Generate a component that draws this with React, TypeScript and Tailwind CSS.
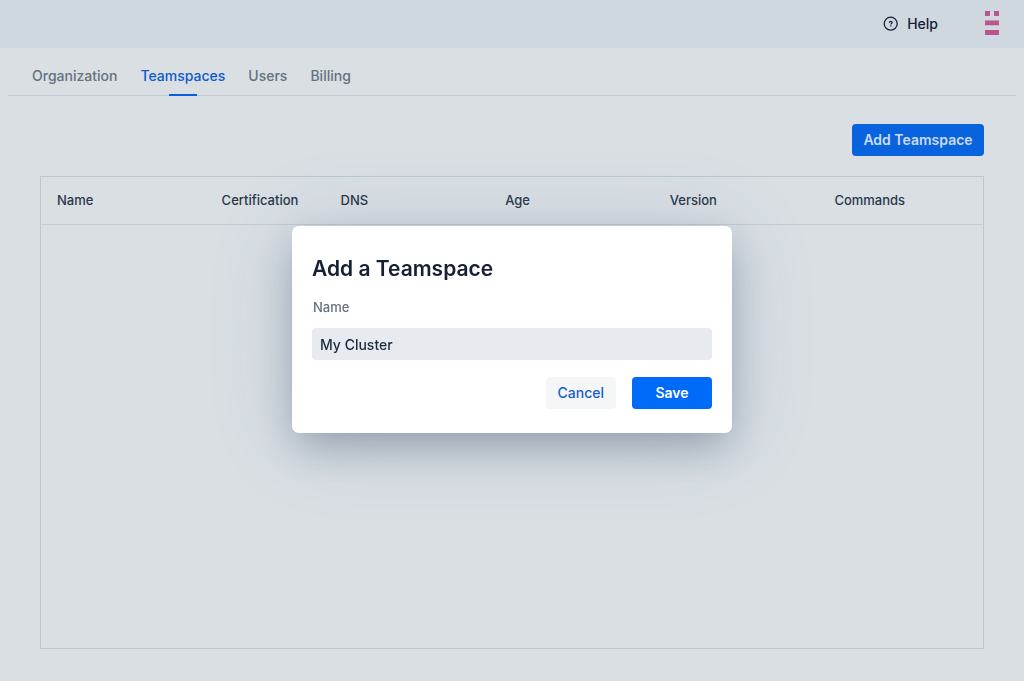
import { useState } from "react";

const tabs = ["Organization", "Teamspaces", "Users", "Billing"];
const columns = [
  { label: "Name", width: "" },
  { label: "Certification", width: "w-[119px]" },
  { label: "DNS", width: "" },
  { label: "Age", width: "" },
  { label: "Version", width: "" },
  { label: "Commands", width: "" },
];

function HelpIcon() {
  return (
    <svg width="16" height="16" viewBox="0 0 16 16" fill="none" stroke="currentColor" aria-hidden="true">
      <circle cx="7.7" cy="7.7" r="6.5" strokeWidth="1.3" />
      <path d="M6.4 6.7C6.4 5.8 7 5.3 7.8 5.3s1.4.5 1.4 1.2c0 .9-1.4 1-1.4 1.9" strokeWidth="1.2" />
      <path d="M7.8 9.2v1.3" strokeWidth="1.3" />
    </svg>
  );
}

function Avatar() {
  return (
    <svg width="28" height="28" viewBox="0 0 28 28" role="img" aria-label="Account">
      <circle cx="14" cy="14" r="14" fill="#d1d7db" />
      <path d="M7 2h5v5H7zM16 2h5v5h-5zM7 11.6h14v4.6H7zM7 21h14v5H7z" fill="#b95591" />
    </svg>
  );
}

function Header() {
  return (
    <header className="flex h-12 items-center justify-end gap-10 bg-[#d0d8df] pr-[18px]">
      <a href="#help" className="flex items-center gap-2 text-[#152238]">
        <HelpIcon />
        Help
      </a>
      <a href="#account" className="mb-0.5">
        <Avatar />
      </a>
    </header>
  );
}

function Tabs() {
  return (
    <nav className="mx-2 flex h-12 gap-[23px] border-b border-[#c2cbd3] px-6">
      {tabs.map((tab) => {
        const active = tab === "Teamspaces";
        return (
          <a
            key={tab}
            href={`#${tab.toLowerCase()}`}
            aria-current={active ? "page" : undefined}
            className={`flex flex-col items-center pt-[18px] leading-5 ${active ? "text-[#0e5bc9]" : "text-[#65717f]"}`}
          >
            {tab}
            {active && <span className="-mb-px mt-auto h-0.5 w-7 bg-[#0b5fdb]" />}
          </a>
        );
      })}
    </nav>
  );
}

function AddTeamspaceDialog({ onClose }: { onClose: () => void }) {
  const [name, setName] = useState("My Cluster");
  return (
    <div className="fixed inset-0 flex items-center justify-center pb-[22px]">
      <form
        role="dialog"
        aria-modal="true"
        aria-labelledby="dialog-title"
        onSubmit={(event) => {
          event.preventDefault();
          onClose();
        }}
        className="flex w-full max-w-[440px] flex-col rounded-[7px] bg-white px-5 pt-7 pb-6 shadow-[0_6px_90px_rgba(60,75,140,0.14),0_16px_40px_-4px_rgba(50,75,95,0.38)]"
      >
        <h2 id="dialog-title" className="text-[21px] leading-[30px] font-semibold text-[#152033]">
          Add a Teamspace
        </h2>
        <label htmlFor="teamspace-name" className="mt-[13px] px-px text-[13px] leading-5 text-[#65717f]">
          Name
        </label>
        <input
          id="teamspace-name"
          value={name}
          onChange={(event) => setName(event.target.value)}
          className="mt-[11px] h-8 rounded bg-[#e7ebf0] px-2 text-[#1c2a3e] outline-none"
        />
        <div className="mt-[17px] flex justify-end gap-4">
          <button type="button" onClick={onClose} className="h-8 rounded bg-[#f4f6f8] px-3 text-[#1a5dc8]">
            Cancel
          </button>
          <button type="submit" className="h-8 w-20 rounded bg-[#006af9] font-semibold text-white">
            Save
          </button>
        </div>
      </form>
    </div>
  );
}

export default function App() {
  const [open, setOpen] = useState(true);
  return (
    <div className="flex min-h-screen flex-col bg-[#d9dfe3] font-['Inter',sans-serif] text-sm font-medium">
      <Header />
      <Tabs />
      <main className="flex grow flex-col px-10 pt-7 pb-8">
        <button
          type="button"
          onClick={() => setOpen(true)}
          className="h-8 w-[132px] self-end rounded bg-[#0962de] font-semibold text-[#c9dbf0]"
        >
          Add Teamspace
        </button>
        <div className="mt-5 grow border border-[#bdc6ce]">
          <table className="w-full table-fixed border-separate border-spacing-0 text-[13px] text-[#2a374b]">
            <thead>
              <tr>
                {columns.map((column) => (
                  <th
                    key={column.label}
                    scope="col"
                    className={`h-12 border-b border-[#c2cbd3] px-4 text-left font-medium ${column.width}`}
                  >
                    {column.label}
                  </th>
                ))}
              </tr>
            </thead>
          </table>
        </div>
      </main>
      {open && <AddTeamspaceDialog onClose={() => setOpen(false)} />}
    </div>
  );
}
